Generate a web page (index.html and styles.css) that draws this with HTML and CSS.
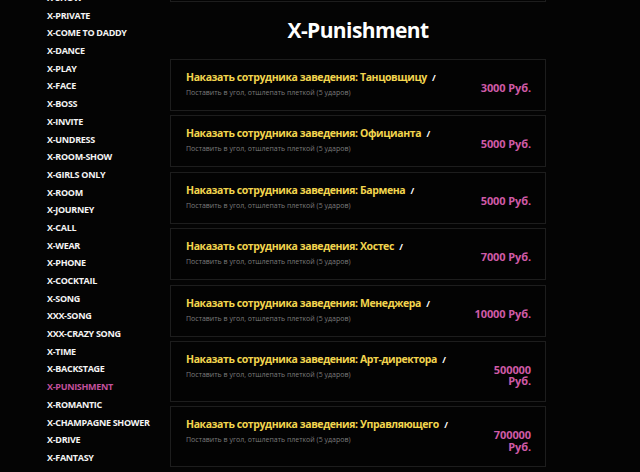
FILE: index.html
```html
<!DOCTYPE html>
<html lang="ru">
<head>
<meta charset="utf-8">
<title>X-Punishment</title>
<link rel="stylesheet" href="styles.css">
</head>
<body>
<div class="page">
  <nav class="sidebar">
    <ul class="menu">
      <li>X-SHOW</li>
      <li>X-PRIVATE</li>
      <li>X-COME TO DADDY</li>
      <li>X-DANCE</li>
      <li>X-PLAY</li>
      <li>X-FACE</li>
      <li>X-BOSS</li>
      <li>X-INVITE</li>
      <li>X-UNDRESS</li>
      <li>X-ROOM-SHOW</li>
      <li>X-GIRLS ONLY</li>
      <li>X-ROOM</li>
      <li>X-JOURNEY</li>
      <li>X-CALL</li>
      <li>X-WEAR</li>
      <li>X-PHONE</li>
      <li>X-COCKTAIL</li>
      <li>X-SONG</li>
      <li>XXX-SONG</li>
      <li>XXX-CRAZY SONG</li>
      <li>X-TIME</li>
      <li>X-BACKSTAGE</li>
      <li class="active">X-PUNISHMENT</li>
      <li>X-ROMANTIC</li>
      <li>X-CHAMPAGNE SHOWER</li>
      <li>X-DRIVE</li>
      <li>X-FANTASY</li>
    </ul>
  </nav>
  <main class="main">
    <div class="card card-prev"></div>
    <h1 class="heading">X-Punishment</h1>
    <div class="list">
      <div class="card">
        <div class="info">
          <div class="title">Наказать сотрудника заведения: Танцовщицу <span class="slash">/</span></div>
          <div class="desc">Поставить в угол, отшлепать плеткой (5 ударов)</div>
        </div>
        <div class="price">3000 Руб.</div>
      </div>
      <div class="card">
        <div class="info">
          <div class="title">Наказать сотрудника заведения: Официанта <span class="slash">/</span></div>
          <div class="desc">Поставить в угол, отшлепать плеткой (5 ударов)</div>
        </div>
        <div class="price">5000 Руб.</div>
      </div>
      <div class="card">
        <div class="info">
          <div class="title">Наказать сотрудника заведения: Бармена <span class="slash">/</span></div>
          <div class="desc">Поставить в угол, отшлепать плеткой (5 ударов)</div>
        </div>
        <div class="price">5000 Руб.</div>
      </div>
      <div class="card">
        <div class="info">
          <div class="title">Наказать сотрудника заведения: Хостес <span class="slash">/</span></div>
          <div class="desc">Поставить в угол, отшлепать плеткой (5 ударов)</div>
        </div>
        <div class="price">7000 Руб.</div>
      </div>
      <div class="card">
        <div class="info">
          <div class="title">Наказать сотрудника заведения: Менеджера <span class="slash">/</span></div>
          <div class="desc">Поставить в угол, отшлепать плеткой (5 ударов)</div>
        </div>
        <div class="price">10000 Руб.</div>
      </div>
      <div class="card">
        <div class="info">
          <div class="title">Наказать сотрудника заведения: Арт-директора <span class="slash">/</span></div>
          <div class="desc">Поставить в угол, отшлепать плеткой (5 ударов)</div>
        </div>
        <div class="price">500000 Руб.</div>
      </div>
      <div class="card">
        <div class="info">
          <div class="title">Наказать сотрудника заведения: Управляющего <span class="slash">/</span></div>
          <div class="desc">Поставить в угол, отшлепать плеткой (5 ударов)</div>
        </div>
        <div class="price">700000 Руб.</div>
      </div>
    </div>
  </main>
</div>
</body>
</html>
```
FILE: styles.css
```css
html, body {
  margin: 0;
  padding: 0;
  background: #040404;
  overflow: hidden;
}
body {
  font-family: "Open Sans", "DejaVu Sans", sans-serif;
  color: #fff;
}
.page {
  display: flex;
  align-items: flex-start;
}
.sidebar {
  width: 170px;
  flex: none;
  box-sizing: border-box;
  padding-left: 47px;
  margin-top: -11px;
}
.menu {
  list-style: none;
  margin: 0;
  padding: 0;
}
.menu li {
  font-size: 9px;
  font-weight: 700;
  line-height: 17.68px;
  letter-spacing: -0.3px;
  color: #f4f4f4;
  white-space: nowrap;
}
.menu li.active {
  color: #c2509c;
}
.main {
  width: 376px;
  flex: none;
}
.card {
  display: flex;
  align-items: flex-start;
  justify-content: space-between;
  border: 1px solid #1d1d1d;
  padding: 10px 14px 12px 15px;
  background: #030303;
}
.card-prev {
  height: 2px;
  padding: 0;
  border-top: none;
  box-sizing: border-box;
}
.heading {
  margin: 0;
  height: 57px;
  line-height: 56px;
  text-align: center;
  font-size: 21px;
  font-weight: 700;
  color: #fff;
  letter-spacing: -0.6px;
}
.list {
  display: flex;
  flex-direction: column;
  gap: 4.4px;
}
.title {
  font-size: 10.5px;
  font-weight: 700;
  line-height: 14px;
  color: #f2d54e;
  letter-spacing: -0.4px;
  white-space: nowrap;
}
.slash {
  color: #fff;
  margin-left: 3px;
  font-size: 9px;
}
.desc {
  margin-top: 3px;
  font-size: 7px;
  line-height: 10px;
  color: #7b7b7b;
  white-space: nowrap;
}
.price {
  margin-top: 12px;
  width: 58px;
  flex: none;
  text-align: right;
  font-size: 11px;
  font-weight: 700;
  line-height: 11.5px;
  color: #cf5aa6;
  letter-spacing: -0.1px;
}
.card:nth-child(n+6) .price {
  padding-bottom: 2px;
}
```
